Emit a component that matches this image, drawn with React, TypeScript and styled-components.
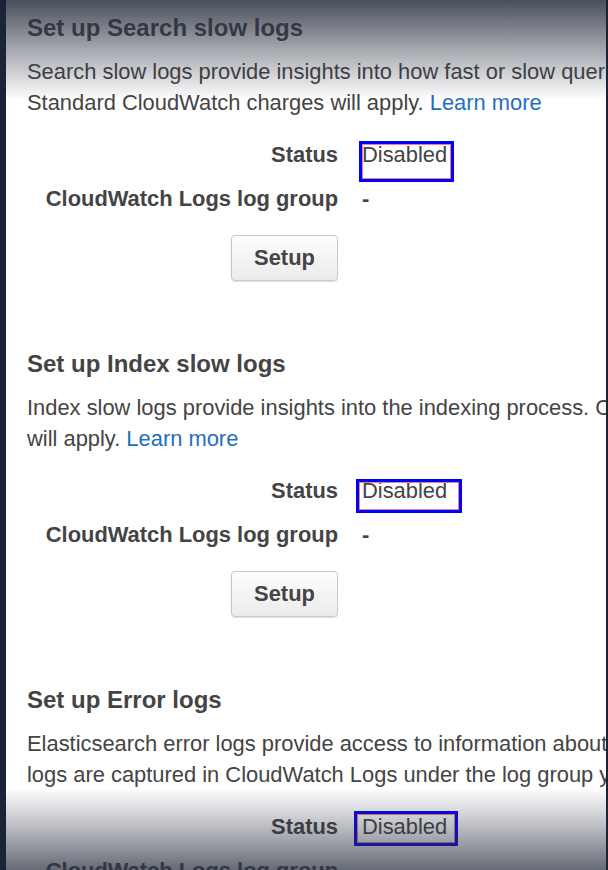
import { FunctionComponent, ReactNode } from "react";
import styled, { createGlobalStyle } from "styled-components";

const GlobalStyle = createGlobalStyle`
  html, body {
    margin: 0;
    padding: 0;
    background: #1b2436;
  }
`;

const Frame = styled.div`
  display: flex;
  width: 608px;
  height: 870px;
  padding: 0 2px 0 6px;
  box-sizing: border-box;
`;

const Panel = styled.main`
  position: relative;
  flex: 1;
  overflow: hidden;
  background: #ffffff;
  padding: 13px 0 0 21px;
  font-family: "Liberation Sans", Arial, sans-serif;
  color: #444444;
`;

const Shade = styled.div<{ $edge: "top" | "bottom" }>`
  position: absolute;
  left: 0;
  right: 0;
  pointer-events: none;
  ${p => p.$edge === "top" ? `
    top: 0;
    height: 100px;
    background: linear-gradient(to bottom, rgba(42, 48, 64, 0.85) 0, rgba(42, 48, 64, 0.42) 50px, rgba(42, 48, 64, 0) 100px);
  ` : `
    bottom: 0;
    height: 82px;
    background: linear-gradient(to top, rgba(42, 48, 64, 0.72) 0, rgba(42, 48, 64, 0.3) 45px, rgba(42, 48, 64, 0) 82px);
  `}
`;

const Section = styled.section`
  padding-bottom: 68px;
`;

const Heading = styled.h3`
  margin: 0;
  font-size: 24px;
  line-height: 30px;
  font-weight: bold;
  color: #444444;
`;

const Description = styled.p`
  margin: 13px 0 0;
  font-size: 21.9px;
  line-height: 31px;
  white-space: nowrap;
`;

const Link = styled.a`
  color: #1f6fc0;
  text-decoration: none;
`;

const Details = styled.div`
  display: grid;
  grid-template-columns: 311px auto;
  column-gap: 24px;
  row-gap: 13px;
  margin-top: 21px;
  font-size: 21.9px;
  line-height: 31px;
`;

const Label = styled.div`
  text-align: right;
  font-weight: bold;
`;

const Value = styled.div<{ $bold?: boolean }>`
  position: relative;
  font-weight: ${p => (p.$bold ? "bold" : "normal")};
`;

const Highlight = styled.span`
  position: absolute;
  border: 3px solid #0000ff;
  box-shadow: inset 0 0 0 1px #f08080;
  box-sizing: border-box;
  pointer-events: none;
`;

const Actions = styled.div`
  display: flex;
  justify-content: flex-end;
  padding-top: 8px;
`;

const Button = styled.button`
  width: 107px;
  height: 46px;
  border: 1px solid #c9c9c9;
  border-radius: 4px;
  background: linear-gradient(to bottom, #fdfdfd, #ebebeb);
  box-shadow: 0 1px 1px rgba(0, 0, 0, 0.12);
  font-family: "Liberation Sans", Arial, sans-serif;
  font-size: 21.9px;
  font-weight: bold;
  color: #444444;
  cursor: pointer;
`;

interface BoxPlace {
  left: number;
  top: number;
  width: number;
  height: number;
}

interface LogSectionProps {
  title: string;
  lines: ReactNode[];
  box: BoxPlace;
}

const LogSection: FunctionComponent<LogSectionProps> = ({ title, lines, box }) => (
  <Section>
    <Heading>{title}</Heading>
    <Description>
      {lines.map((line, i) => (
        <span key={i}>
          {i > 0 && <br />}
          {line}
        </span>
      ))}
    </Description>
    <Details>
      <Label>Status</Label>
      <Value>
        Disabled
        <Highlight style={{ left: box.left, top: box.top, width: box.width, height: box.height }} />
      </Value>
      <Label>CloudWatch Logs log group</Label>
      <Value $bold>-</Value>
      <Actions>
        <Button type="button">Setup</Button>
      </Actions>
    </Details>
  </Section>
);

export default function App() {
  return (
    <>
      <GlobalStyle />
      <Frame>
        <Panel>
          <LogSection
            title="Set up Search slow logs"
            lines={[
              "Search slow logs provide insights into how fast or slow queries and fetches are performing.",
              <>Standard CloudWatch charges will apply. <Link href="#">Learn more</Link></>
            ]}
            box={{ left: -3, top: 2, width: 95, height: 41 }}
          />
          <LogSection
            title="Set up Index slow logs"
            lines={[
              "Index slow logs provide insights into the indexing process. CloudWatch charges",
              <>will apply. <Link href="#">Learn more</Link></>
            ]}
            box={{ left: -6, top: 4, width: 106, height: 34 }}
          />
          <LogSection
            title="Set up Error logs"
            lines={[
              "Elasticsearch error logs provide access to information about errors and warnings.",
              "logs are captured in CloudWatch Logs under the log group you specify."
            ]}
            box={{ left: -8, top: 0, width: 104, height: 35 }}
          />
          <Shade $edge="top" />
          <Shade $edge="bottom" />
        </Panel>
      </Frame>
    </>
  );
}
